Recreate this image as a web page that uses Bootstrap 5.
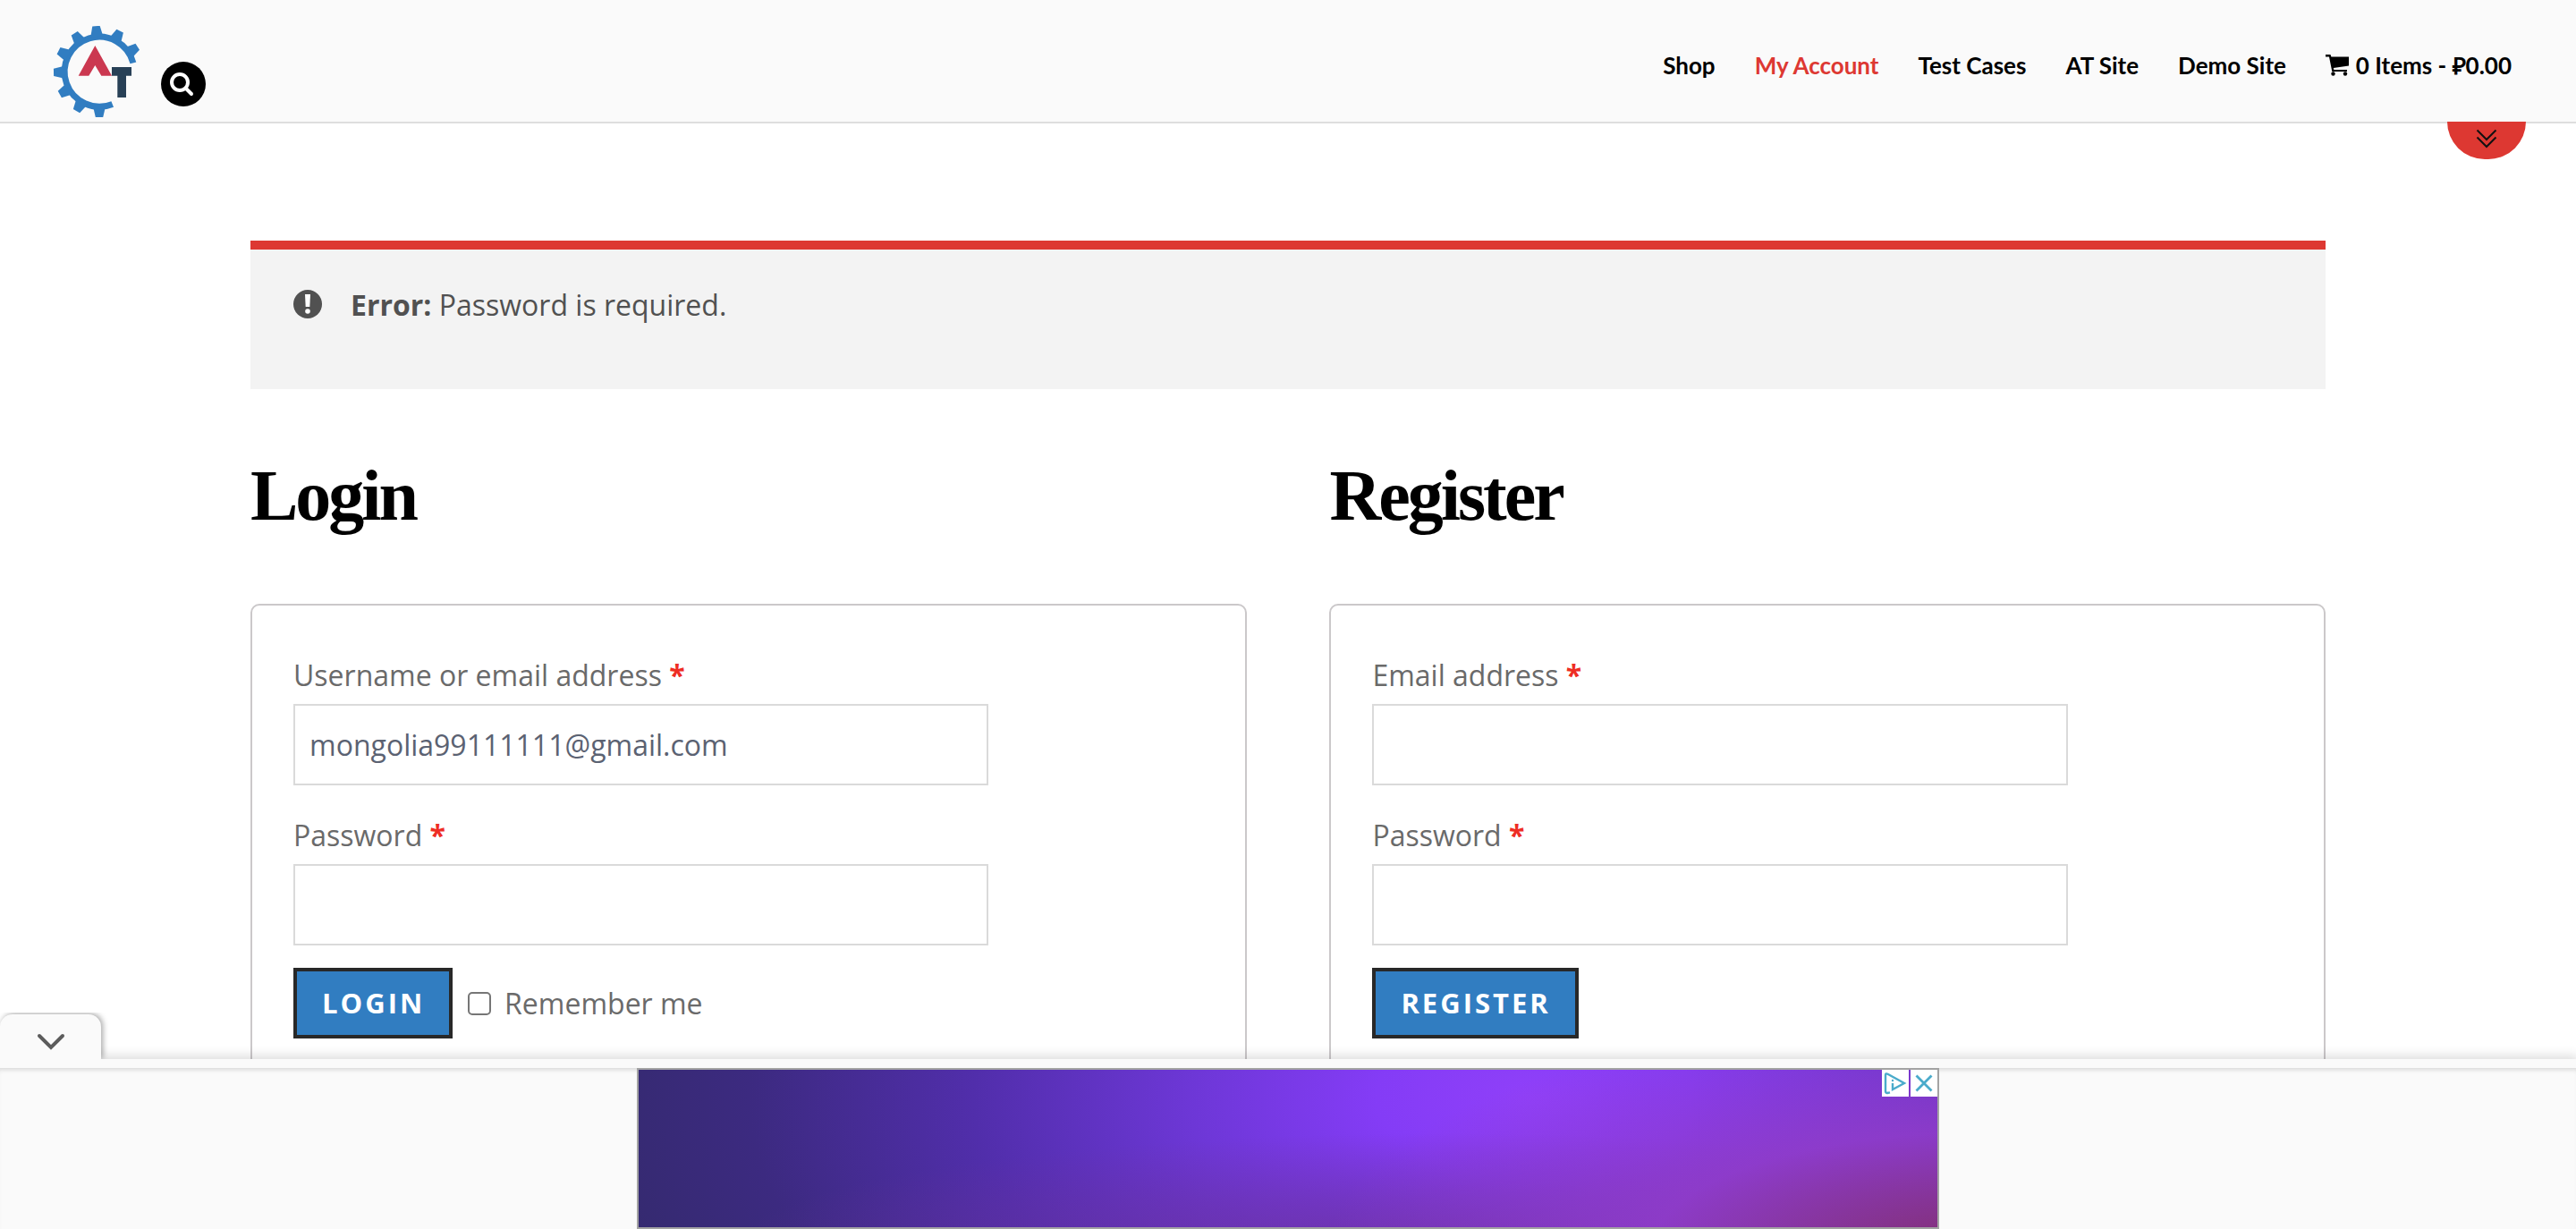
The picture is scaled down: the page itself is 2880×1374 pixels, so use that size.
<!DOCTYPE html>
<html lang="en">
<head>
<meta charset="utf-8">
<meta name="viewport" content="width=device-width, initial-scale=1">
<title>My Account</title>
<link rel="stylesheet" href="https://cdn.jsdelivr.net/npm/bootstrap@5.3.0/dist/css/bootstrap.min.css">
<style>
body{font-family:"Open Sans","Noto Sans",sans-serif;font-size:32px;line-height:52px;color:#515151;background:#fff}
.site-header{background:#fafafa;border-bottom:2px solid #dedede;height:138px;padding:0 72px 0 58px;z-index:3}
.search-btn{width:50px;height:50px;background:#000;margin-top:52px}
.main-links{gap:44px;padding-top:9px;font-size:26px;font-weight:700;line-height:36px;font-family:Lato,"Open Sans",sans-serif}
.main-links a{color:#000;text-decoration:none}
.main-links a.current{color:#dd3832}
.pull-tab{position:absolute;right:56px;top:136px;width:88px;height:42px;background:#dd3832;border-radius:0 0 44px 44px}
.page-wrap{width:81%;max-width:2320px;padding-top:131px}
.notice{border-top:10px solid #dd3832;background:#f3f3f3;padding:36px 48px 68px;gap:32px}
.cols{gap:4%;margin-top:75px}
.panel-title{font-family:"Liberation Serif",serif;font-weight:700;font-size:80px;line-height:88px;letter-spacing:-3px;color:#000;margin-bottom:77px}
.form-box{border:2px solid #cbc8ca;border-radius:10px;padding:52px 46px;color:#6a6a6a}
.field{margin-bottom:30px}
.field label{margin-bottom:6px}
.field .form-control{width:76.4%;height:91px;border:2px solid #dadada;border-radius:0;font-size:32px;padding:0 16px;color:#5b6272;background:#fff}
.last-field{margin-bottom:25px}
.required{color:#ee2d24;font-weight:700}
.action{background:#317dc1;color:#fff;border:4px solid #282828;border-radius:0;font-size:31px;font-weight:700;letter-spacing:3px;line-height:39px;padding:16px 27px 16px 28px}
.remember{margin-left:17px;gap:15px}
.remember .form-check-input{width:26px;height:26px;margin:0;border:2px solid #767676;border-radius:5px}
.ad-bar{background:#fafafa;z-index:4;padding-top:10px;box-shadow:0 0 12px 3px rgba(0,0,0,.15)}
.ad-inner{box-shadow:inset 0 5px 5px -3px rgba(0,0,0,.14);height:180px}
.ad-frame{width:1456px;border:2px solid #a3a3a3;gap:2px;
background:radial-gradient(ellipse 50% 150% at 103% 115%,#833078 5%,rgba(145,60,200,.85) 50%,rgba(140,55,220,0) 100%),radial-gradient(ellipse 55% 75% at 62% 115%,rgba(110,50,160,.85),rgba(110,50,160,0)),radial-gradient(ellipse 72% 300% at 69% 18%,#9040f9 0,#843cf6 17%,#6d37d6 37%,#512eab 60%,#3c2a80 84%,#352a70 100%)}
.ad-btn{width:30px;height:30px;background:#fff}
.collapse-tab{position:absolute;left:0;bottom:100%;width:113px;height:50px;background:#fafafa;border-radius:14px 14px 0 0;box-shadow:2px -1px 6px rgba(0,0,0,.35);clip-path:inset(-2px -14px 0 0)}
.collapse-tab svg{margin-top:20px}
</style>
<script src="https://cdn.jsdelivr.net/npm/bootstrap@5.3.0/dist/js/bootstrap.bundle.min.js"></script>
</head>
<body class="vh-100 d-flex flex-column overflow-hidden">
<header class="site-header position-relative d-flex justify-content-between flex-shrink-0">
  <div class="d-flex align-items-center">
    <a href="#" aria-label="Home" class="d-flex mt-4">
      <svg width="98" height="102" viewBox="-1 -1 98 102">
        <defs><path id="tooth" d="M-7-39L-4.200-51H4.200L7-39Z"/></defs>
        <g transform="translate(52 50)" fill="#317dc1">
          <path d="M14.7 36.4A39 39 0 1 1 37.9-9.6" fill="none" stroke="#317dc1" stroke-width="7"/>
          <use href="#tooth" transform="rotate(57)"/><use href="#tooth" transform="rotate(27)"/><use href="#tooth" transform="rotate(-4)"/><use href="#tooth" transform="rotate(-33)"/><use href="#tooth" transform="rotate(-63)"/><use href="#tooth" transform="rotate(-91)"/><use href="#tooth" transform="rotate(-120)"/><use href="#tooth" transform="rotate(-150)"/><use href="#tooth" transform="rotate(180)"/>
        </g>
        <path fill="#cb3850" d="M47.3 21L66 54.8H54.3L47.3 43 40.3 54.8H28.7Z"/>
        <path fill="#284056" d="M66 45H88V54.8H82V79H72.3V54.8H66Z"/>
      </svg>
    </a>
    <button type="button" class="search-btn btn p-0 border-0 rounded-circle d-flex align-items-center justify-content-center ms-4" aria-label="Search">
      <svg width="50" height="50" viewBox="0 0 50 50" fill="none" stroke="#fff" stroke-width="4"><circle cx="21" cy="23" r="9"/><path d="M28 30L34 36" stroke-linecap="round"/></svg>
    </button>
  </div>
  <nav class="main-links d-flex align-items-center">
    <a href="#">Shop</a><a href="#" class="current">My Account</a><a href="#">Test Cases</a><a href="#">AT Site</a><a href="#">Demo Site</a>
    <a href="#" class="d-flex align-items-center gap-2"><svg width="26" height="24" viewBox="0 0 26 24"><path d="M0 0H5.5L6.4 2.5H26V12.5L8.8 15 9.3 17H24V19H7.3L4 2.5H0Z"/><circle cx="8.5" cy="21.5" r="2.2"/><circle cx="22" cy="21.5" r="2.2"/></svg><span>0 Items - ₽0.00</span></a>
  </nav>
  <button type="button" class="pull-tab btn border-0 p-0 d-flex justify-content-center" aria-label="Open panel"><svg width="24" height="42" viewBox="0 0 24 42" fill="none" stroke="#111" stroke-width="2"><path d="M1.5 9.500L12 20 22.500 9.500M1.500 17.500L12 28 22.500 17.500"/></svg></button>
</header>

<main class="flex-fill overflow-hidden">
  <div class="page-wrap mx-auto">
    <div class="notice d-flex" role="alert">
      <svg class="mt-2" width="32" height="34" viewBox="0 0 32 34"><circle cx="16" cy="17" r="16" fill="#515151"/><path d="M13 6H19L18.300 20H13.700Z" fill="#fff"/><circle cx="16" cy="25" r="2.800" fill="#fff"/></svg>
      <div><strong>Error:</strong> Password is required.</div>
    </div>
    <div class="cols d-flex">
      <section class="w-50">
        <h2 class="panel-title">Login</h2>
        <form class="form-box">
          <div class="field"><label class="d-block" for="user">Username or email address <span class="required">*</span></label><input class="form-control" id="user" type="text" value="mongolia99111111@gmail.com"></div>
          <div class="field last-field"><label class="d-block" for="pass">Password <span class="required">*</span></label><input class="form-control" id="pass" type="password"></div>
          <div class="d-flex align-items-center">
            <button type="button" class="btn action">LOGIN</button>
            <div class="remember d-flex align-items-center"><input class="form-check-input" type="checkbox" id="remember"><label for="remember">Remember me</label></div>
          </div>
        </form>
      </section>
      <section class="w-50">
        <h2 class="panel-title">Register</h2>
        <form class="form-box">
          <div class="field"><label class="d-block" for="email">Email address <span class="required">*</span></label><input class="form-control" id="email" type="email"></div>
          <div class="field last-field"><label class="d-block" for="newpass">Password <span class="required">*</span></label><input class="form-control" id="newpass" type="password"></div>
          <button type="button" class="btn action d-block">REGISTER</button>
        </form>
      </section>
    </div>
  </div>
</main>

<footer class="ad-bar position-relative flex-shrink-0">
  <button type="button" class="collapse-tab btn border-0 p-0 d-flex justify-content-center" aria-label="Collapse"><svg width="32" height="20" viewBox="0 0 32 20" fill="none" stroke="#5c5c5c" stroke-width="4" stroke-linecap="round"><path d="M3 4L16 17 29 4"/></svg></button>
  <div class="ad-inner d-flex justify-content-center">
    <div class="ad-frame d-flex justify-content-end align-items-start">
      <button type="button" class="ad-btn btn border-0 rounded-0 p-0 d-flex" aria-label="Ad information"><svg width="30" height="30" viewBox="0 0 30 30" fill="none" stroke="#4aabcb" stroke-width="2.400"><path d="M9 25.300L6 26Q4 26 4 24V6Q4 3.500 6.500 4.800L25 15 12 22V15"/><circle cx="12" cy="12" r="1.200" fill="#4aabcb" stroke="none"/></svg></button>
      <button type="button" class="ad-btn btn border-0 rounded-0 p-0 d-flex" aria-label="Close ad"><svg width="30" height="30" viewBox="0 0 30 30" stroke="#4aabcb" stroke-width="2.800"><path d="M6.500 6.500L23.500 23.500M23.500 6.500L6.500 23.500"/></svg></button>
    </div>
  </div>
</footer>
</body>
</html>
